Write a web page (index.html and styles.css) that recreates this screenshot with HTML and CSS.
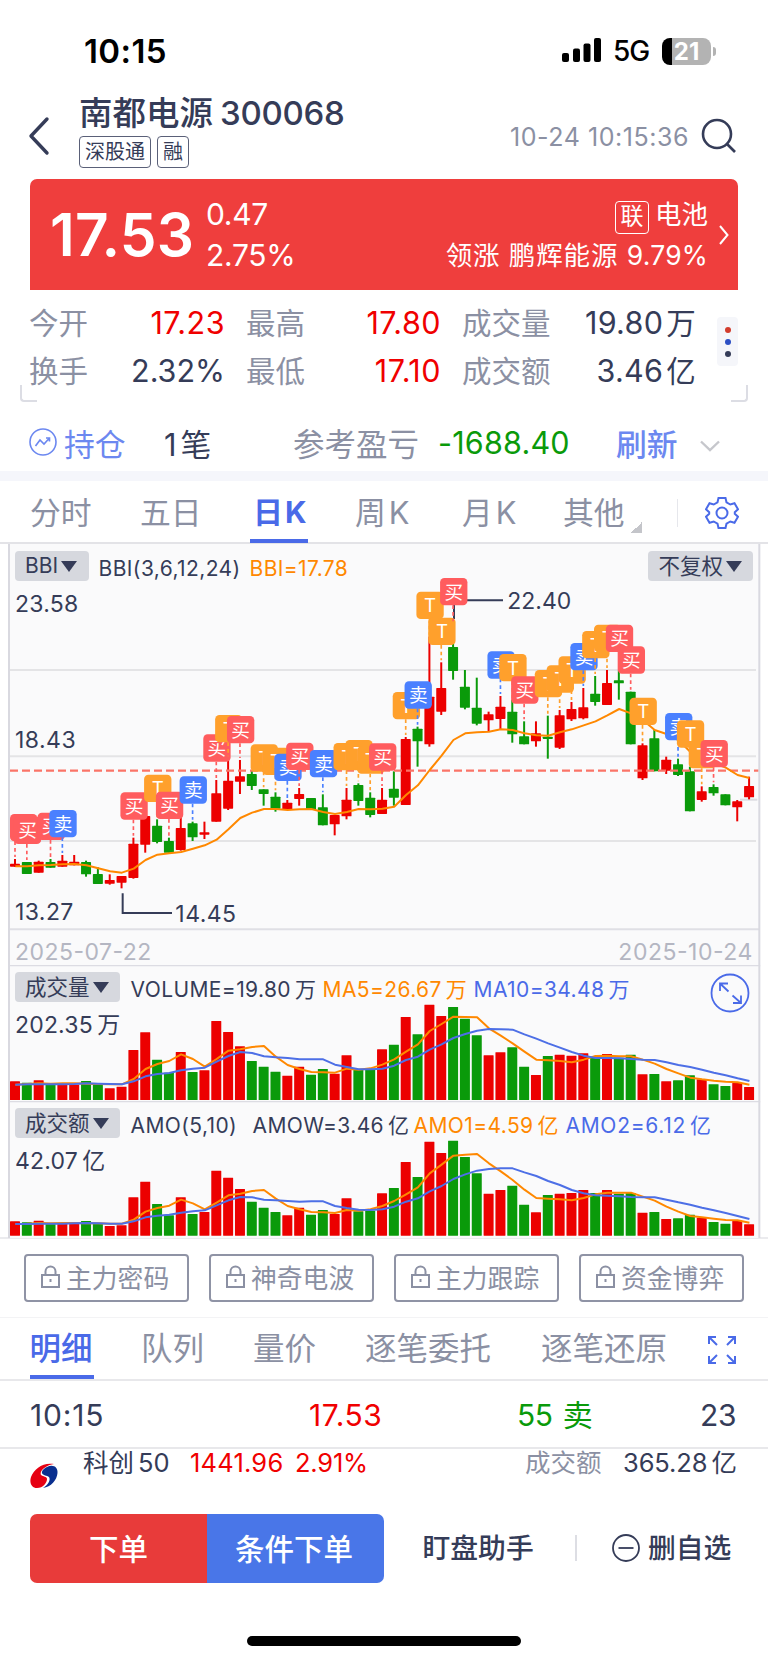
FILE: index.html
```html
<!DOCTYPE html>
<html lang="zh-CN">
<head>
    <meta charset="UTF-8">
    <meta name="viewport" content="width=device-width, initial-scale=1.0">
    <title>南都电源 300068</title>
    <link rel="stylesheet" href="styles.css">
</head>
<body>
    <div class="status-bar">
        <span class="clock">10:15</span>
        <svg class="signal" width="40" height="26" viewBox="0 0 40 26">
            <rect x="0" y="15" width="7" height="9" rx="2"/>
            <rect x="11" y="10.500" width="7" height="13.500" rx="2"/>
            <rect x="21.500" y="5.500" width="7" height="18.500" rx="2"/>
            <rect x="32" y="0" width="7" height="24" rx="2"/>
        </svg>
        <span class="network">5G</span>
        <div class="battery"><span>21</span></div>
        <div class="battery-cap"></div>
    </div>

    <header class="header">
        <svg class="back" width="24" height="40" viewBox="0 0 24 40"><path d="M19 3L3 20L19 37"/></svg>
        <div class="stock">
            <h1>南都电源<b>300068</b></h1>
            <div class="tags"><span>深股通</span><span>融</span></div>
        </div>
        <time>10-24 10:15:36</time>
        <svg class="search" width="36" height="36" viewBox="0 0 36 36"><circle cx="16" cy="16" r="14"/><path d="M26 26L34 34"/></svg>
    </header>

    <section class="quote">
        <div class="price">17.53</div>
        <div class="change"><span>0.47</span><span>2.75%</span></div>
        <div class="sector">
            <div><i>联</i>电池</div>
            <div class="leader">领涨 鹏辉能源 <b>9.79%</b></div>
        </div>
        <svg class="more" width="10" height="20" viewBox="0 0 10 20"><path d="M1 1L8.500 10L1 19"/></svg>
    </section>

    <section class="stats">
        <div class="stats-grid">
            <label>今开</label><span class="red">17.23</span>
            <label>最高</label><span class="red">17.80</span>
            <label>成交量</label><span>19.80<em>万</em></span>
            <label>换手</label><span>2.32%</span>
            <label>最低</label><span class="red">17.10</span>
            <label>成交额</label><span>3.46<em>亿</em></span>
        </div>
        <div class="dots"><i></i><i></i><i></i></div>
    </section>
    <div class="corners"><i></i><i></i></div>

    <section class="position">
        <svg width="28" height="28" viewBox="0 0 28 28"><circle cx="14" cy="14" r="13"/><path d="M6.500 18L11 12L15 16L20.500 10M17 10H20.500V13.500"/></svg>
        <span class="hold">持仓</span>
        <span class="count">1<em>笔</em></span>
        <span class="label">参考盈亏</span>
        <span class="profit">-1688.40</span>
        <span class="refresh">刷新</span>
        <svg class="down" width="20" height="12" viewBox="0 0 20 12"><path d="M1 1.500L10 10L19 1.500"/></svg>
    </section>

    <nav class="tabs">
        <span>分时</span>
        <span>五日</span>
        <span class="active">日<b>K</b></span>
        <span>周<b>K</b></span>
        <span>月<b>K</b></span>
        <span class="other">其他</span>
        <div class="gear">
            <svg width="34" height="34" viewBox="0 0 34 34">
                <path d="M13.500 2H20.500L21.500 6.300L25.300 8.500L29.500 7.200L33 13.300L29.800 16.300V17.700L33 20.700L29.500 26.800L25.300 25.500L21.500 27.700L20.500 32H13.500L12.500 27.700L8.700 25.500L4.500 26.800L1 20.700L4.200 17.700V16.300L1 13.300L4.500 7.200L8.700 8.500L12.500 6.300Z"/>
                <circle cx="17" cy="17" r="5.500"/>
            </svg>
        </div>
    </nav>

    <section class="charts">
        <div class="panel kline">
            <svg id="kline" viewBox="0 12 2304 1263"></svg>
            <div class="panel-head">
                <button class="short">BBI<i></i></button>
                <span class="bbi-name">BBI(3,6,12,24)</span>
                <span class="bbi-value orange">BBI=17.78</span>
                <button class="right">不复权<i></i></button>
            </div>
        </div>
        <div class="panel volume">
            <svg id="volume" viewBox="0 15 2304 408"></svg>
            <div class="panel-head">
                <button>成交量<i></i></button>
                <span class="v0">VOLUME=19.80<em>万</em></span>
                <span class="v1 orange">MA5=26.67<em>万</em></span>
                <span class="v2 blue">MA10=34.48<em>万</em></span>
            </div>
            <svg class="zoom" width="40" height="40" viewBox="0 0 40 40">
                <circle cx="20" cy="20" r="18.500"/>
                <path d="M10 18V10.500H18M10 10.500L18.500 18.500M22.500 22.500L31 30M23 30H31V22.500"/>
            </svg>
        </div>
        <div class="panel amount">
            <svg id="amount" viewBox="0 423 2304 411"></svg>
            <div class="panel-head">
                <button>成交额<i></i></button>
                <span class="a0">AMO(5,10)</span>
                <span class="a1">AMOW=3.46<em>亿</em></span>
                <span class="a2 orange">AMO1=4.59<em>亿</em></span>
                <span class="a3 blue">AMO2=6.12<em>亿</em></span>
            </div>
        </div>
    </section>

    <div class="locks">
        <button><svg width="19" height="24" viewBox="0 0 19 24"><path d="M1 10H18V22H1ZM4.500 10V6.500A5 5 0 0 1 14.500 6.500V10M9.500 14V17"/></svg>主力密码</button>
        <button><svg width="19" height="24" viewBox="0 0 19 24"><path d="M1 10H18V22H1ZM4.500 10V6.500A5 5 0 0 1 14.500 6.500V10M9.500 14V17"/></svg>神奇电波</button>
        <button><svg width="19" height="24" viewBox="0 0 19 24"><path d="M1 10H18V22H1ZM4.500 10V6.500A5 5 0 0 1 14.500 6.500V10M9.500 14V17"/></svg>主力跟踪</button>
        <button><svg width="19" height="24" viewBox="0 0 19 24"><path d="M1 10H18V22H1ZM4.500 10V6.500A5 5 0 0 1 14.500 6.500V10M9.500 14V17"/></svg>资金博弈</button>
    </div>

    <nav class="detail-tabs">
        <span class="active">明细</span>
        <span>队列</span>
        <span>量价</span>
        <span>逐笔委托</span>
        <span>逐笔还原</span>
        <svg width="28" height="28" viewBox="0 0 28 28"><path d="M1 8V1H8M1 1L9 9M20 1H27V8M27 1L19 9M1 20V27H8M1 27L9 19M27 20V27H20M27 27L19 19"/></svg>
    </nav>

    <div class="tick">
        <span>10:15</span>
        <span class="red">17.53</span>
        <span class="green">55 <em>卖</em></span>
        <span>23</span>
    </div>

    <div class="index-row">
        <svg class="logo" width="28" height="26" viewBox="0 0 28 26">
            <path fill="#e60012" d="M24 1C13-1 4 6 1 14C-1 20 2 25 7 25C13 25 17 20 17 16C17 13 13 14 11 12C9 8 16 2 24 1Z"/>
            <path fill="#0a2f8f" d="M17 4C23 1 28 4 27.500 10C27 17 21 24 13 25C18 22 21 17 19 14C17 12 13 13 12 10C11.500 8 14 5.500 17 4Z"/>
        </svg>
        <span class="name">科创<em>50</em></span>
        <span class="point red">1441.96</span>
        <span class="rate red">2.91%</span>
        <span class="turnover">成交额</span>
        <span class="total">365.28<em>亿</em></span>
    </div>

    <footer class="footer">
        <button class="order">下单</button>
        <button class="cond">条件下单</button>
        <span class="watch">盯盘助手</span>
        <div class="remove">
            <svg width="28" height="28" viewBox="0 0 28 28"><circle cx="14" cy="14" r="13"/><path d="M6.500 14H21.500"/></svg>
            删自选
        </div>
    </footer>
    <div class="home-bar"></div>

    <script src="chart.js"></script>
</body>
</html>
```
FILE: styles.css
```css
:root {
    --text: #353c58;
    --muted: #8b90a3;
    --blue: #4a6ae8;
    --red: #f00000;
    --green: #0a9a0a;
    --orange: #ff8800;
    --line: #e3e3e7;
}

* {
    box-sizing: border-box;
    margin: 0;
    padding: 0;
}

body {
    width: 768px;
    height: 1663px;
    overflow: hidden;
    background: #fff;
    color: var(--text);
    font-family: Inter, "Noto Sans CJK SC", sans-serif;
    font-weight: 400;
}

svg {
    display: block;
    flex: none;
    fill: none;
    stroke: currentColor;
    stroke-width: 2;
}

button {
    font: inherit;
    color: inherit;
    border: none;
    background: none;
}

em, i {
    font-style: normal;
}

span, time, label {
    white-space: nowrap;
}

em {
    margin-left: 4px;
}

.red { color: var(--red); }
.green { color: var(--green); }
.orange { color: var(--orange); }
.blue { color: var(--blue); }

/* 状态栏 */
.status-bar {
    display: flex;
    align-items: center;
    height: 102px;
    padding-left: 84px;
    color: #000;
}

.clock {
    width: 478px;
    font-size: 33px;
    font-weight: 600;
    letter-spacing: 0.4px;
}

.signal {
    fill: #000;
    stroke: none;
}

.network {
    width: 49px;
    margin-left: 11px;
    font-size: 28px;
    font-weight: 500;
    letter-spacing: -1px;
}

.battery {
    width: 49px;
    height: 27px;
    border-radius: 8px;
    background: linear-gradient(to right, #000 10px, #b3b3b3 10px);
    color: #fff;
    font-size: 24px;
    font-weight: 700;
    line-height: 27px;
    text-align: center;
}

.battery-cap {
    width: 3px;
    height: 9px;
    margin-left: 2px;
    border-radius: 0 4px 4px 0;
    background: #b3b3b3;
}

/* 标题 */
.header {
    display: flex;
    height: 77px;
    padding-left: 28px;
}

.back {
    margin-top: 14px;
    stroke-width: 3.4;
    stroke-linecap: round;
    stroke-linejoin: round;
}

.stock {
    width: 431px;
    margin-left: 27px;
    margin-top: -8px;
}

.stock h1 {
    height: 42px;
    font-size: 33.5px;
    font-weight: 500;
    line-height: 38px;
}

.stock h1 b {
    margin-left: 7px;
    font-weight: 500;
    font-size: 33px;
    letter-spacing: -0.3px;
}

.tags {
    display: flex;
    gap: 6px;
}

.tags span {
    height: 32px;
    padding: 0 5px;
    border: 1.500px solid #5a6078;
    border-radius: 4px;
    font-size: 20px;
    line-height: 31px;
}

.header time {
    width: 180px;
    margin-top: 20px;
    color: var(--muted);
    font-size: 25px;
    line-height: 30px;
    letter-spacing: 0.55px;
}

.search {
    margin: 16px 0 0 11px;
    stroke-width: 2.6;
}

/* 报价 */
.quote {
    display: flex;
    height: 111px;
    margin: 0 30px;
    padding-left: 20px;
    border-radius: 7px 7px 0 0;
    background: #ef3e3d;
    color: #fff;
}

.price {
    width: 156px;
    font-size: 58.500px;
    font-weight: 600;
    line-height: 112px;
    letter-spacing: 0.2px;
}

.change {
    display: flex;
    flex-direction: column;
    width: 130px;
    padding-top: 15px;
    font-size: 30px;
    line-height: 41px;
    letter-spacing: -0.3px;
}

.sector {
    display: flex;
    flex-direction: column;
    align-items: flex-end;
    width: 372px;
    padding-top: 15px;
    font-size: 26.5px;
    line-height: 41px;
}

.sector i {
    display: inline-block;
    width: 34px;
    height: 33px;
    margin-right: 6px;
    border: 1.500px solid #fff;
    border-radius: 4px;
    font-size: 23px;
    line-height: 29px;
    text-align: center;
}

.leader {
    letter-spacing: 0.9px;
}

.leader b {
    font-weight: 400;
    letter-spacing: 0.2px;
}

.more {
    margin: 46px 0 0 11px;
}

/* 行情数据 */
.stats {
    display: flex;
    height: 95px;
    padding: 10px 30px 0;
}

.stats-grid {
    display: grid;
    grid-template-columns: 80px 137px 79px 137px 95px 138px;
    grid-auto-rows: 47.500px;
    width: 666px;
    font-size: 29.500px;
    line-height: 46px;
}

.stats-grid label {
    margin-left: -1px;
    color: var(--muted);
}

.stats-grid span {
    padding-right: 22px;
    font-size: 30.500px;
    text-align: right;
}

.stats-grid .red {
    letter-spacing: 0.5px;
}

.stats-grid em {
    margin-left: 3px;
    font-size: 29.500px;
}

.stats-grid span:nth-of-type(3n) {
    padding-right: 0;
    letter-spacing: 0.3px;
}

.dots {
    display: flex;
    flex-direction: column;
    align-items: center;
    justify-content: center;
    gap: 6px;
    width: 22px;
    height: 49px;
    margin: 17px 0 0 21px;
    border-radius: 4px;
    background: #f5f6fa;
}

.dots i {
    width: 6px;
    height: 6px;
    border-radius: 50%;
    background: #353c58;
}

.dots i:nth-child(1) { background: #d23c2c; }
.dots i:nth-child(2) { background: #2c4fc4; }

.corners {
    display: flex;
    justify-content: space-between;
    height: 17px;
    padding: 0 20px;
}

.corners i {
    width: 17px;
    border: solid #dcdde4;
    border-width: 0 0 2px 2px;
    border-radius: 0 0 0 4px;
}

.corners i:last-child {
    border-width: 0 2px 2px 0;
    border-radius: 0 0 4px 0;
}

/* 持仓 */
.position {
    display: flex;
    align-items: center;
    height: 79px;
    padding: 11px 0 0 29px;
    border-bottom: 10px solid #f5f6fb;
    font-size: 30.800px;
}

.position svg {
    color: #6c88f0;
    stroke-width: 1.6;
}

.hold {
    width: 100px;
    margin-left: 7px;
    color: #6c88f0;
}

.count {
    width: 129px;
}

.position .label {
    width: 145px;
    color: var(--muted);
    font-size: 31.500px;
}

.profit {
    width: 178px;
    color: var(--green);
    font-size: 30.500px;
    letter-spacing: 0.2px;
}

.refresh {
    width: 84px;
    color: #6c88f0;
    font-weight: 500;
}

.position .down {
    margin-top: 8px;
    color: #c6c7cc;
    stroke-width: 2.400;
}

/* 周期 */
.tabs {
    display: grid;
    grid-template-columns: 110px 109px 106px 107px 101px 113px 1fr;
    height: 63px;
    padding-left: 30px;
    border-bottom: 2px solid var(--line);
    color: var(--muted);
    font-size: 30.800px;
    line-height: 63px;
}

.tabs b {
    margin-left: 3px;
    font-weight: inherit;
}

.tabs .active {
    justify-self: start;
    width: 58px;
    height: 62px;
    margin-left: 1px;
    padding: 0 0 0 3px;
    border-bottom: 4px solid var(--blue);
    color: var(--blue);
    font-size: 30px;
    font-weight: 700;
    z-index: 1;
}

.tabs .active b {
    margin-left: 2px;
}

.other::after {
    content: "";
    display: inline-block;
    margin-left: 6px;
    border: solid transparent;
    border-width: 11px 0 0 11px;
    background: linear-gradient(135deg, transparent 50%, #c4c5ca 50%);
    background-clip: border-box;
    background-origin: border-box;
    transform: translateY(9px);
}

.gear {
    height: 28px;
    margin-top: 18px;
    margin-left: 1px;
    padding-left: 27px;
    border-left: 1px solid #e6e7ec;
    color: var(--blue);
}

.gear svg {
    margin-top: -3px;
}

/* 图表 */
.charts {
    height: 695px;
    border-bottom: 2px solid #ebebee;
}

.panel {
    position: relative;
    background: linear-gradient(#fafafb, #fafafb) 9px 0 / 750px 100% no-repeat;
}

.panel > svg:first-child {
    position: absolute;
    inset: 0;
    width: 768px;
    stroke: none;
}

.kline { height: 421px; }
.volume { height: 136px; }
.amount { height: 137px; }

.panel-head {
    position: relative;
    display: flex;
    padding: 7px 15px 0;
    font-size: 21px;
    line-height: 30px;
    letter-spacing: 0.4px;
}

.panel-head button {
    display: flex;
    align-items: center;
    height: 30px;
    padding: 0 11px 0 10px;
    border-radius: 4px;
    background: #d6d8de;
    font-size: 21.500px;
    letter-spacing: 0;
}

.panel-head .short {
    width: 74px;
    font-size: 21px;
}

.panel-head button i {
    margin-left: 3px;
    border: solid transparent;
    border-width: 11px 8px 0;
    border-top-color: var(--text);
}

.panel-head span {
    padding-top: 3px;
}

.panel-head .right { margin-left: auto; }
.bbi-name { width: 151px; margin-left: 9.500px; }
.v0 { width: 192px; margin-left: 11px; }
.v1 { width: 151px; }
.a0 { width: 122px; margin-left: 11px; }
.a1 { width: 161px; }
.a2 { width: 152px; }
.a3 { letter-spacing: 0.7px; }

.zoom {
    position: absolute;
    right: 18px;
    top: 8px;
    color: var(--blue);
    stroke-width: 1.8;
}

/* 加锁指标 */
.locks {
    display: flex;
    gap: 20px;
    height: 79px;
    padding: 14.500px 24px 0;
    border-bottom: 1px solid #f3f3f5;
}

.locks button {
    display: flex;
    align-items: center;
    gap: 6px;
    width: 165px;
    height: 48px;
    padding: 0 0 2px 15px;
    border: 2px solid #8f93a5;
    border-radius: 4px;
    color: var(--muted);
    font-size: 25.800px;
}

/* 明细 */
.detail-tabs {
    display: grid;
    grid-template-columns: 111.500px 112px 112px 176px 167px 28px;
    height: 63px;
    padding-left: 29.500px;
    border-bottom: 2px solid #e8e8eb;
    color: var(--muted);
    font-size: 31.500px;
    line-height: 62px;
}

.detail-tabs .active {
    justify-self: start;
    width: 64px;
    height: 61px;
    border-bottom: 4px solid var(--blue);
    color: var(--blue);
    font-weight: 500;
}

.detail-tabs svg {
    margin-top: 18px;
    color: var(--blue);
}

.tick {
    display: grid;
    grid-template-columns: 279px 208px 183px 38px;
    height: 68px;
    padding-left: 30px;
    border-bottom: 2px solid #e8e8eb;
    font-size: 30px;
    line-height: 68px;
    letter-spacing: 0.8px;
}

.tick span:nth-child(2) {
    letter-spacing: 0.6px;
}

.tick span:nth-child(n+3) {
    letter-spacing: -0.4px;
}

.tick em {
    margin-left: 2px;
}

.index-row {
    display: flex;
    height: 65px;
    padding-left: 30px;
    font-size: 25.500px;
    line-height: 27px;
}

.logo {
    margin: 14px 25px 0 0;
    stroke: none;
}

.name { width: 107px; }
.point { width: 105px; letter-spacing: 0.2px; }
.rate { width: 230px; letter-spacing: -0.2px; }
.turnover { width: 98px; color: var(--muted); }
.total { letter-spacing: -0.1px; }

/* 底部 */
.footer {
    display: flex;
    height: 122px;
    padding-left: 30px;
    font-size: 27.800px;
    font-weight: 500;
    line-height: 68px;
}

.footer button {
    width: 177px;
    height: 69px;
    color: #fff;
    font-size: 29.500px;
}

.order {
    border-radius: 7px 0 0 7px;
    background: #e83b3a;
}

.cond {
    padding-right: 3px;
    border-radius: 0 7px 7px 0;
    background: #4976e8;
}

.watch {
    width: 152.500px;
    margin-left: 38.500px;
}

.remove {
    display: flex;
    align-items: center;
    gap: 8px;
    height: 26px;
    margin-top: 21px;
    padding-left: 35px;
    border-left: 2px solid #dddee4;
}

.remove svg {
    stroke-width: 1.800;
}

.home-bar {
    width: 274px;
    height: 10px;
    margin: 0 auto;
    border-radius: 5px;
    background: #000;
}
```
FILE: chart.js
```javascript
const RED = '#ec0000';
const GREEN = '#0a9a0a';
const ORANGE = '#ff8800';
const BLUE = '#4d6fe6';
const DARK = '#353c58';
const STEP = 35.52;

const px = i => 44 + STEP * i;

// [方向, 最高, 实体上, 实体下, 最低]
const candles = [
    [1, 957, 971, 980, 980], [0, 966, 966, 1002, 1002], [1, 962, 965, 998, 998], [0, 957, 966, 983, 983],
    [1, 945, 962, 980, 980], [1, 945, 965, 976, 976], [0, 962, 966, 1003, 1010], [0, 982, 1002, 1032, 1032],
    [1, 1003, 1020, 1031, 1034], [1, 1008, 1008, 1028, 1045], [1, 893, 911, 1014, 1016], [1, 828, 828, 914, 938],
    [0, 838, 857, 906, 910], [0, 893, 903, 938, 938], [1, 830, 864, 930, 932], [0, 845, 850, 892, 903],
    [1, 845, 877, 884, 897], [1, 720, 760, 845, 845], [1, 655, 722, 806, 810], [1, 660, 709, 725, 762],
    [0, 692, 702, 738, 750], [0, 748, 748, 762, 797], [0, 757, 770, 806, 815], [1, 780, 788, 810, 810],
    [1, 744, 762, 777, 797], [0, 774, 774, 808, 808], [0, 763, 802, 856, 856], [1, 825, 825, 853, 886],
    [1, 744, 779, 829, 838], [0, 730, 735, 783, 797], [0, 757, 773, 825, 832], [1, 744, 779, 822, 822],
    [0, 694, 746, 773, 797], [1, 591, 597, 795, 795], [0, 560, 566, 604, 680], [1, 290, 470, 613, 620],
    [1, 367, 444, 515, 525], [0, 250, 321, 393, 419], [0, 390, 440, 503, 508], [0, 413, 503, 551, 556],
    [1, 515, 523, 541, 574], [1, 468, 500, 537, 568], [0, 480, 515, 583, 608], [0, 544, 589, 613, 613],
    [1, 544, 580, 604, 620], [0, 527, 590, 597, 656], [1, 510, 526, 623, 627], [1, 486, 507, 538, 543],
    [1, 444, 502, 535, 538], [0, 408, 461, 486, 497], [1, 390, 429, 495, 495], [0, 391, 421, 430, 479],
    [0, 455, 455, 613, 613], [1, 610, 616, 715, 720], [0, 570, 595, 694, 694], [1, 650, 659, 692, 702],
    [0, 656, 673, 705, 708], [0, 680, 694, 814, 814], [1, 739, 754, 780, 785], [0, 733, 741, 760, 767],
    [0, 763, 763, 796, 796], [1, 780, 784, 802, 844], [1, 710, 738, 772, 778]
];

const bbi = [979, 979, 976, 975, 973, 972, 976, 985, 994, 998, 986, 960, 944, 940, 936, 926, 916, 899, 868, 834, 818,
    807, 807, 810, 808, 807, 816, 822, 816, 807, 808, 806, 800, 765, 736, 690, 647, 600, 580, 577, 575, 568, 570, 580,
    586, 587, 577, 568, 556, 544, 526, 507, 520, 540, 570, 582, 600, 635, 655, 670, 683, 705, 714];

// 买卖点 [序号, 类型, 顶部]
const marks = [
    [0, 'B', 822], [1, 'B', 830], [3, 'B', 818], [4, 'S', 810], [10, 'B', 757], [12, 'T', 704], [13, 'B', 755],
    [15, 'S', 709], [17, 'B', 583], [18, 'T', 525], [19, 'B', 528], [21, 'T', 613], [22, 'T', 623], [23, 'S', 641],
    [24, 'B', 608], [26, 'S', 630], [28, 'T', 609], [29, 'T', 600], [30, 'T', 619], [31, 'B', 610], [33, 'T', 456],
    [34, 'S', 424], [35, 'T', 155], [36, 'T', 233], [37, 'B', 114], [41, 'S', 334], [42, 'T', 342], [43, 'B', 409],
    [45, 'T', 390], [46, 'T', 376], [47, 'T', 349], [48, 'S', 309], [49, 'T', 273], [50, 'T', 254], [51, 'B', 254],
    [52, 'B', 319], [53, 'T', 473], [56, 'S', 519], [57, 'T', 541], [58, 'T', 603], [59, 'B', 600]
];
const markStyle = {
    B: ['买', '#ff5c5e'],
    S: ['卖', '#4a80ff'],
    T: ['T', '#ffa02c']
};

const vol = [364, 368, 361, 374, 374, 374, 363, 372, 385, 380, 270, 217, 299, 338, 276, 336, 331, 183, 216, 259, 303,
    320, 335, 347, 320, 344, 327, 341, 286, 330, 328, 268, 254, 171, 223, 134, 168, 141, 176, 226, 286, 277, 262, 320,
    345, 288, 284, 287, 280, 290, 282, 293, 284, 343, 342, 364, 361, 346, 358, 373, 378, 369, 381];
const volMa5 = [374, 372, 370, 371, 370, 370, 371, 372, 373, 373, 357, 327, 312, 303, 283, 297, 320, 297, 272, 268, 261,
    258, 290, 315, 327, 336, 337, 338, 326, 329, 325, 314, 298, 275, 253, 213, 192, 170, 171, 172, 205, 227, 250, 275,
    299, 301, 303, 307, 299, 288, 287, 289, 289, 299, 311, 327, 340, 353, 358, 362, 365, 367, 374];
const volMa10 = [374, 373, 373, 373, 373, 372, 370, 371, 372, 373, 364, 349, 342, 339, 331, 326, 323, 305, 288, 276, 279,
    289, 292, 294, 298, 298, 298, 314, 321, 328, 328, 326, 317, 300, 290, 269, 253, 234, 222, 212, 207, 208, 209, 223,
    236, 250, 263, 276, 287, 294, 294, 295, 297, 299, 300, 307, 315, 321, 329, 338, 346, 355, 363];

const amo = [784, 787, 782, 792, 790, 790, 783, 791, 798, 796, 712, 665, 732, 766, 712, 762, 756, 632, 653, 687, 725,
    743, 756, 766, 743, 764, 750, 762, 715, 754, 752, 700, 684, 606, 651, 545, 579, 542, 591, 640, 701, 690, 677, 734,
    757, 705, 701, 699, 690, 699, 690, 701, 699, 758, 756, 777, 775, 764, 773, 786, 791, 783, 793];
const amo1 = [792, 791, 789, 790, 789, 789, 790, 790, 791, 791, 779, 755, 744, 737, 719, 730, 748, 728, 706, 701, 693,
    690, 716, 738, 748, 756, 757, 759, 750, 752, 748, 738, 723, 703, 682, 640, 614, 587, 584, 582, 610, 634, 660, 689,
    714, 716, 718, 721, 714, 703, 698, 698, 698, 710, 722, 740, 755, 768, 772, 776, 780, 781, 788];
const amo2 = [792, 792, 791, 791, 791, 790, 789, 790, 791, 791, 784, 772, 767, 764, 758, 754, 751, 736, 721, 711, 712,
    719, 721, 723, 725, 724, 724, 738, 744, 749, 750, 748, 740, 725, 715, 694, 678, 657, 643, 632, 627, 625, 625, 637,
    648, 663, 675, 690, 700, 706, 707, 709, 711, 712, 712, 719, 727, 734, 743, 751, 759, 768, 777];

function rect(x, y, w, h, fill, rx = 0) {
    return `<rect x="${x}" y="${y}" width="${w}" height="${h}" rx="${rx}" fill="${fill}"/>`;
}

function line(x1, y1, x2, y2, color, width, dash = '') {
    return `<line x1="${x1}" y1="${y1}" x2="${x2}" y2="${y2}" stroke="${color}" stroke-width="${width}" stroke-dasharray="${dash}"/>`;
}

function curve(data, color) {
    const pts = data.map((y, i) => `${px(i) + 2},${y}`).join(' ');
    return `<polyline points="${pts}" fill="none" stroke="${color}" stroke-width="6" stroke-linejoin="round"/>`;
}

function text(x, y, str, len, color = DARK) {
    return `<text x="${x - 1}" y="${y}" font-size="69" fill="${color}" textLength="${len + 2}">${str}</text>`;
}

function frame(top, bottom) {
    return line(27, top, 27, bottom, '#d9d9e0', 6) + line(2278, top, 2278, bottom, '#d9d9e0', 6);
}

function drawKline() {
    let s = '';
    [390, 649, 903].forEach(y => { s += line(30, y, 2268, y, '#e4e4e6', 6); });
    s += line(2220, 779, 2272, 779, '#dcdce0', 6);
    s += line(30, 1168, 2278, 1168, '#dfdfe5', 6);

    candles.forEach(([up, high, top, bottom, low], i) => {
        const c = up ? RED : GREEN;
        s += line(px(i) + 1, high, px(i) + 1, low, c, 6);
        s += rect(px(i) - 14, top, 30, bottom - top, c, 2);
    });
    s += line(30, 692, 2276, 692, '#fa7468', 7, '24 12');
    s += curve(bbi, ORANGE);

    // 最高最低价引线
    s += `<path d="M1362 237V181H1509M368 1060V1119H516" fill="none" stroke="${DARK}" stroke-width="6"/>`;

    marks.forEach(([i, type, top]) => {
        const [label, color] = markStyle[type];
        const left = Math.max(30, px(i) - 38);
        s += line(px(i) + 1, top + 82, px(i) + 1, candles[i][1] - 6, color, 5, '11 9');
        s += rect(left, top, 82, 82, color, 13);
        s += `<text x="${left + 41}" y="${top + 62}" font-size="56" fill="#fff" text-anchor="middle">${label}</text>`;
    });

    s += text(46, 215, '23.58', 188) + text(46, 624, '18.43', 180) + text(46, 1139, '13.27', 173);
    s += text(1523, 208, '22.40', 190) + text(527, 1146, '14.45', 180);
    s += text(46, 1259, '2025-07-22', 407, '#b4b6c2') + text(1856, 1259, '2025-10-24', 400, '#b4b6c2');
    s += frame(12, 1275);
    document.getElementById('kline').innerHTML = s;
}

function drawBars(id, data, short, long, base, top, label, unit, len) {
    let s = line(24, top, 2281, top, '#dcdce3', 6);
    data.forEach((y, i) => {
        s += rect(px(i) - 14, y, 30, base - y, candles[i][0] ? RED : GREEN, 1);
    });
    s += curve(short, ORANGE) + curve(long, BLUE);
    s += text(46, top + 202, label, len) + text(46 + len + 16, top + 202, unit, 65);
    s += frame(top, base + 8);
    document.getElementById(id).innerHTML = s;
}

drawKline();
drawBars('volume', vol, volMa5, volMa10, 420, 16, '202.35', '万', 231);
drawBars('amount', amo, amo1, amo2, 827, 424, '42.07', '亿', 186);
```
